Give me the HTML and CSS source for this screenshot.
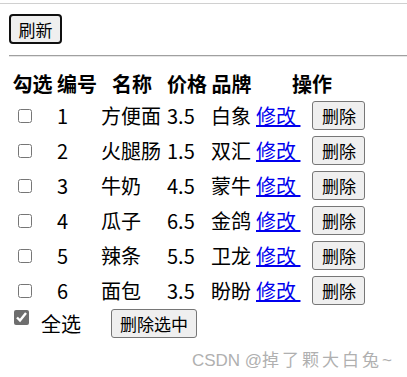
FILE: index.html
```html
<!DOCTYPE html>
<html>

<head>
    <title>商品列表</title>
    <meta charset="utf-8">
    <meta name="viewport" content="width=device-width, initial-scale=1.0">
    <link rel="stylesheet" href="styles.css">
</head>

<body>
    <div class="topline"></div>

    <div class="bar">
        <button class="knap fokus">刷新</button>
    </div>

    <hr class="skille">

    <table class="varer">
        <tr>
            <th class="c1">勾选</th>
            <th class="c2">编号</th>
            <th class="c3">名称</th>
            <th class="c4">价格</th>
            <th class="c5">品牌</th>
            <th class="c6">操作</th>
        </tr>
        <tr>
            <td><input type="checkbox" class="vaelg"></td>
            <td>1</td>
            <td>方便面</td>
            <td>3.5</td>
            <td>白象</td>
            <td><a href="#">修改&nbsp;</a><button class="knap slet">删除</button></td>
        </tr>
        <tr>
            <td><input type="checkbox" class="vaelg"></td>
            <td>2</td>
            <td>火腿肠</td>
            <td>1.5</td>
            <td>双汇</td>
            <td><a href="#">修改&nbsp;</a><button class="knap slet">删除</button></td>
        </tr>
        <tr>
            <td><input type="checkbox" class="vaelg"></td>
            <td>3</td>
            <td>牛奶</td>
            <td>4.5</td>
            <td>蒙牛</td>
            <td><a href="#">修改&nbsp;</a><button class="knap slet">删除</button></td>
        </tr>
        <tr>
            <td><input type="checkbox" class="vaelg"></td>
            <td>4</td>
            <td>瓜子</td>
            <td>6.5</td>
            <td>金鸽</td>
            <td><a href="#">修改&nbsp;</a><button class="knap slet">删除</button></td>
        </tr>
        <tr>
            <td><input type="checkbox" class="vaelg"></td>
            <td>5</td>
            <td>辣条</td>
            <td>5.5</td>
            <td>卫龙</td>
            <td><a href="#">修改&nbsp;</a><button class="knap slet">删除</button></td>
        </tr>
        <tr>
            <td><input type="checkbox" class="vaelg"></td>
            <td>6</td>
            <td>面包</td>
            <td>3.5</td>
            <td>盼盼</td>
            <td><a href="#">修改&nbsp;</a><button class="knap slet">删除</button></td>
        </tr>
    </table>

    <div class="bund">
        <input type="checkbox" class="alle" checked>
        <span class="alle-tekst">全选</span>
        <button class="knap">删除选中</button>
    </div>

    <div class="maerke">CSDN @<span class="cjk">掉了颗大白兔</span>~</div>
</body>

</html>
```
FILE: styles.css
```css
body {
    margin: 0;
    font-family: "Noto Sans CJK SC", "Liberation Sans", sans-serif;
    color: #000;
    position: relative;
    min-height: 377px;
}

.topline {
    margin-top: 3px;
    height: 1px;
    background: #d0d0d0;
}

.bar {
    height: 30px;
    padding: 10px 0 0 9px;
}

.knap {
    font-family: "Noto Sans CJK SC", sans-serif;
    font-size: 17px;
    height: 29px;
    padding: 0 8px;
    line-height: 27px;
    background: #efefef;
    border: 1px solid #767676;
    border-radius: 3px;
    color: #000;
    box-sizing: border-box;
}

.fokus {
    display: block;
    width: 53px;
    height: 30px;
    border: 2px solid #101010;
    border-radius: 4px;
    padding: 0 7px;
}

.skille {
    margin: 11px 0 0 9px;
    border: none;
    border-top: 1px solid #a0a0a0;
    border-bottom: 1px solid #e6e6e6;
}

.varer {
    margin: 11px 0 0 9px;
    border-spacing: 2px;
    font-size: 20px;
}

.varer th {
    padding: 1px;
    height: 25px;
    line-height: 25px;
    font-weight: bold;
}

.varer td {
    padding: 1px;
    height: 31px;
    line-height: 31px;
    vertical-align: top;
    white-space: nowrap;
}

.c1 { width: 41px; }
.c2 { width: 40px; }
.c3 { width: 62px; }
.c4 { width: 40px; }
.c5 { width: 41px; }
.c6 { width: 112px; }

.vaelg {
    width: 14px;
    height: 14px;
    margin: 9px 0 0 6px;
    vertical-align: top;
}

.varer a {
    color: #0000ee;
}

.slet {
    width: 53px;
    margin: 1px 0 0 12px;
    vertical-align: top;
}

.bund {
    display: flex;
    align-items: center;
    height: 29px;
    padding-left: 14px;
    font-size: 20px;
}

.alle {
    width: 15px;
    height: 15px;
    margin: 1px 0 0;
    align-self: flex-start;
    accent-color: #6e6e6e;
}

.alle-tekst {
    margin-left: 12px;
    margin-right: 30px;
}

.maerke {
    position: absolute;
    right: 15px;
    top: 346px;
    font-family: "Liberation Sans", "Noto Sans CJK SC", sans-serif;
    font-size: 17px;
    color: #b0b0b0;
}

.maerke .cjk {
    letter-spacing: 3px;
}
```
